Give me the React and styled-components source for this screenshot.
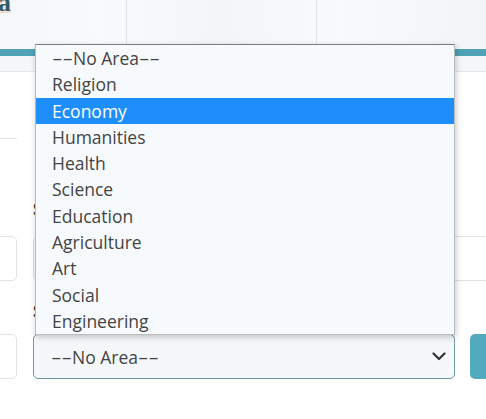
import React from "react";
import styled, { createGlobalStyle } from "styled-components";

const Global = createGlobalStyle`
  html, body { margin: 0; padding: 0; background: #ffffff; }
  body { font-family: "Open Sans", "Noto Sans", sans-serif; }
  * { box-sizing: border-box; }
`;

const Page = styled.div`
  position: relative;
  width: 486px;
  height: 419px;
  overflow: hidden;
  background: #ffffff;
`;

const Header = styled.header`
  height: 49px;
  display: grid;
  grid-template-columns: 126px 190px 1fr;
  background: linear-gradient(90deg, #f5f7f8 0%, #f9fafb 20%, #f3f6f7 45%, #f8fafb 70%, #f2f5f6 100%);
`;

const HeaderCell = styled.div`
  border-left: ${(p) => (p.$divider ? "1px solid #e2e5e7" : "none")};
  overflow: hidden;
`;

const Logo = styled.span`
  display: block;
  margin-top: -10px;
  margin-left: -2px;
  font-family: "Liberation Serif", "DejaVu Serif", serif;
  font-weight: 700;
  font-size: 26px;
  line-height: 26px;
  color: #32586b;
  text-shadow: 0 2px 0 rgba(230, 160, 110, 0.35);
`;

const TealBar = styled.div`
  height: 7px;
  background: #4fa2b5;
`;

const SubBar = styled.div`
  height: 16px;
  background: #f4f6f7;
  border-bottom: 1px solid #e3e6e8;
`;

const Grid = styled.div`
  display: grid;
  grid-template-columns: 17px 1fr;
  column-gap: 16px;
`;

const TopCell = styled.div`
  height: 67px;
  border-bottom: 1px solid #e3e6e8;
`;

const Spacer = styled.div`
  height: 67px;
`;

const Label = styled.div`
  margin-top: ${(p) => p.$top}px;
  margin-bottom: ${(p) => p.$bottom}px;
  height: 24px;
  font-size: 16px;
  line-height: 24px;
  font-weight: 700;
  color: #333;
  white-space: nowrap;
`;

const SideBox = styled.div`
  height: 45px;
  width: 40px;
  margin-left: -23px;
  border: 1px solid #e1e4e6;
  border-radius: 5px;
  background: #fff;
`;

const FieldRow = styled.div`
  display: flex;
  gap: 15px;
  height: 45px;
`;

const TextInput = styled.div`
  flex: 1;
  margin-right: -20px;
  border: 1px solid #dfe2e5;
  border-radius: 5px;
  background: #fff;
`;

const SelectBox = styled.div`
  width: 422px;
  flex: none;
  display: flex;
  align-items: center;
  justify-content: space-between;
  padding: 0 8px 0 17px;
  border: 1px solid #6f98a6;
  border-radius: 5px;
  background: #f4f8fb;
  font-size: 17.5px;
  color: #444;
`;

const Button = styled.div`
  flex: 1;
  margin-right: -20px;
  border-radius: 5px;
  background: #53a9be;
`;

const Dropdown = styled.ul`
  position: absolute;
  left: 35px;
  top: 44px;
  width: 420px;
  height: 291px;
  margin: 0;
  padding: 0;
  list-style: none;
  background: #f7fafc;
  border: 1px solid #b9bcbf;
  border-top-color: #7c7f82;
  box-shadow: 1px 2px 6px rgba(0, 0, 0, 0.22);
`;

const Option = styled.li`
  height: 26.3px;
  padding-left: 16px;
  font-size: 17.5px;
  line-height: 26.3px;
  color: ${(p) => (p.$active ? "#ffffff" : "#444")};
  background: ${(p) => (p.$active ? "#1e8ffa" : "transparent")};
  white-space: nowrap;
`;

const Dash = styled.span`
  display: inline-block;
  width: 21px;
  letter-spacing: 0;
  transform: scaleX(1.85);
  transform-origin: left center;
  margin-right: ${(p) => (p.$end ? 0 : 0)}px;
`;

const Chevron = () => (
  <svg width="14" height="9" viewBox="0 0 14 9" fill="none">
    <path d="M1.5 1.5 L7 7 L12.5 1.5" stroke="#333" strokeWidth="2.2" strokeLinecap="round" strokeLinejoin="round" />
  </svg>
);

const NoArea = () => (
  <span>
    <Dash>--</Dash>No Area<Dash $end>--</Dash>
  </span>
);

const options = [
  "--No Area--",
  "Religion",
  "Economy",
  "Humanities",
  "Health",
  "Science",
  "Education",
  "Agriculture",
  "Art",
  "Social",
  "Engineering",
];

export default function App() {
  return (
    <Page>
      <Global />
      <Header>
        <HeaderCell>
          <Logo>a</Logo>
        </HeaderCell>
        <HeaderCell $divider />
        <HeaderCell $divider />
      </Header>
      <TealBar />
      <SubBar />
      <Grid>
        <div>
          <TopCell />
          <Label $top={58} $bottom={15}>&nbsp;</Label>
          <SideBox />
          <Label $top={18} $bottom={11}>&nbsp;</Label>
          <SideBox />
        </div>
        <div>
          <Spacer />
          <Label $top={58} $bottom={15}>Subject</Label>
          <FieldRow>
            <TextInput />
          </FieldRow>
          <Label $top={18} $bottom={11}>Subject Area</Label>
          <FieldRow>
            <SelectBox>
              <NoArea />
              <Chevron />
            </SelectBox>
            <Button />
          </FieldRow>
        </div>
      </Grid>
      <Dropdown>
        {options.map((o) => (
          <Option key={o} $active={o === "Economy"}>
            {o === "--No Area--" ? <NoArea /> : o}
          </Option>
        ))}
      </Dropdown>
    </Page>
  );
}
